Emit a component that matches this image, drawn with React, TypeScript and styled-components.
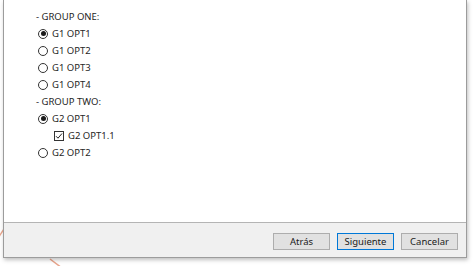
import React, { useState } from 'react';
import styled, { createGlobalStyle } from 'styled-components';

const GlobalStyle = createGlobalStyle`
  html, body {
    margin: 0;
    padding: 0;
    background: #fff;
    overflow: hidden;
  }
  body {
    font-family: "Noto Sans", "Open Sans", sans-serif;
  }
`;

const Desktop = styled.div`
  position: relative;
  width: 474px;
  height: 266px;
  background: #fff;
`;

const Wallpaper = styled.svg`
  position: absolute;
  left: 0;
  top: 0;
`;

const Window = styled.div`
  position: relative;
  margin-left: 3px;
  width: 464px;
  height: 258px;
  display: flex;
  flex-direction: column;
  border-left: 1px solid #9c9c9c;
  border-right: 1px solid #9c9c9c;
  border-bottom: 1px solid #9c9c9c;
  box-sizing: border-box;
  box-shadow: 1px 2px 4px rgba(0, 0, 0, 0.25);
  background: #fff;
`;

const Content = styled.div`
  flex: 1;
  background: #fff;
  padding: 8px 0 0 32px;
  display: flex;
  flex-direction: column;
`;

const GroupTitle = styled.div`
  height: 17px;
  line-height: 17px;
  font-size: 9.5px;
  color: #262626;
`;

const Option = styled.label<{ $indent?: number }>`
  height: 17px;
  display: flex;
  align-items: center;
  gap: 4px;
  padding-left: ${(p) => 2 + (p.$indent ?? 0)}px;
  font-size: 9.5px;
  color: #262626;
  cursor: default;
`;

const Radio = styled.span<{ $on: boolean }>`
  width: 10px;
  height: 10px;
  border-radius: 50%;
  border: 1px solid #333;
  box-sizing: border-box;
  display: flex;
  align-items: center;
  justify-content: center;
  background: #fff;
  &::after {
    content: '';
    width: 5px;
    height: 5px;
    border-radius: 50%;
    background: ${(p) => (p.$on ? '#1a1a1a' : 'transparent')};
  }
`;

const Check = styled.span`
  width: 10px;
  height: 10px;
  border: 1px solid #333;
  box-sizing: border-box;
  background: #fff;
  display: flex;
  align-items: center;
  justify-content: center;
`;

const Footer = styled.div`
  height: 35px;
  box-sizing: border-box;
  background: #f0f0f0;
  border-top: 1px solid #b4b4b4;
  display: flex;
  justify-content: flex-end;
  align-items: flex-start;
  gap: 7px;
  padding: 10px 8px 0 0;
`;

const Button = styled.button<{ $primary?: boolean }>`
  width: 57px;
  height: 17px;
  padding: 0;
  font-family: inherit;
  font-size: 9.5px;
  color: #1a1a1a;
  background: #e1e1e1;
  border: 1px solid ${(p) => (p.$primary ? '#0078d7' : '#adadad')};
  box-shadow: ${(p) => (p.$primary ? 'inset 0 0 0 1px #e1e1e1' : 'none')};
`;

const App: React.FC = () => {
  const [g1, setG1] = useState(1);
  const [g2, setG2] = useState(1);

  return (
    <Desktop>
      <GlobalStyle />
      <Wallpaper width="474" height="266">
        <line x1="-2" y1="238" x2="6" y2="226" stroke="#e9a58c" strokeWidth="1.5" />
        <line x1="50" y1="259" x2="62" y2="268" stroke="#e9a58c" strokeWidth="1.5" />
      </Wallpaper>
      <Window>
        <Content>
          <GroupTitle>- GROUP ONE:</GroupTitle>
          {[1, 2, 3, 4].map((n) => (
            <Option key={n} onClick={() => setG1(n)}>
              <Radio $on={g1 === n} />
              G1 OPT{n}
            </Option>
          ))}
          <GroupTitle>- GROUP TWO:</GroupTitle>
          <Option onClick={() => setG2(1)}>
            <Radio $on={g2 === 1} />
            G2 OPT1
          </Option>
          <Option $indent={16}>
            <Check>
              <svg width="8" height="8" viewBox="0 0 8 8">
                <path d="M1 4.2 L3 6.2 L7 1.5" fill="none" stroke="#222" strokeWidth="1" />
              </svg>
            </Check>
            G2 OPT1.1
          </Option>
          <Option onClick={() => setG2(2)}>
            <Radio $on={g2 === 2} />
            G2 OPT2
          </Option>
        </Content>
        <Footer>
          <Button>Atrás</Button>
          <Button $primary>Siguiente</Button>
          <Button>Cancelar</Button>
        </Footer>
      </Window>
    </Desktop>
  );
};

export default App;
